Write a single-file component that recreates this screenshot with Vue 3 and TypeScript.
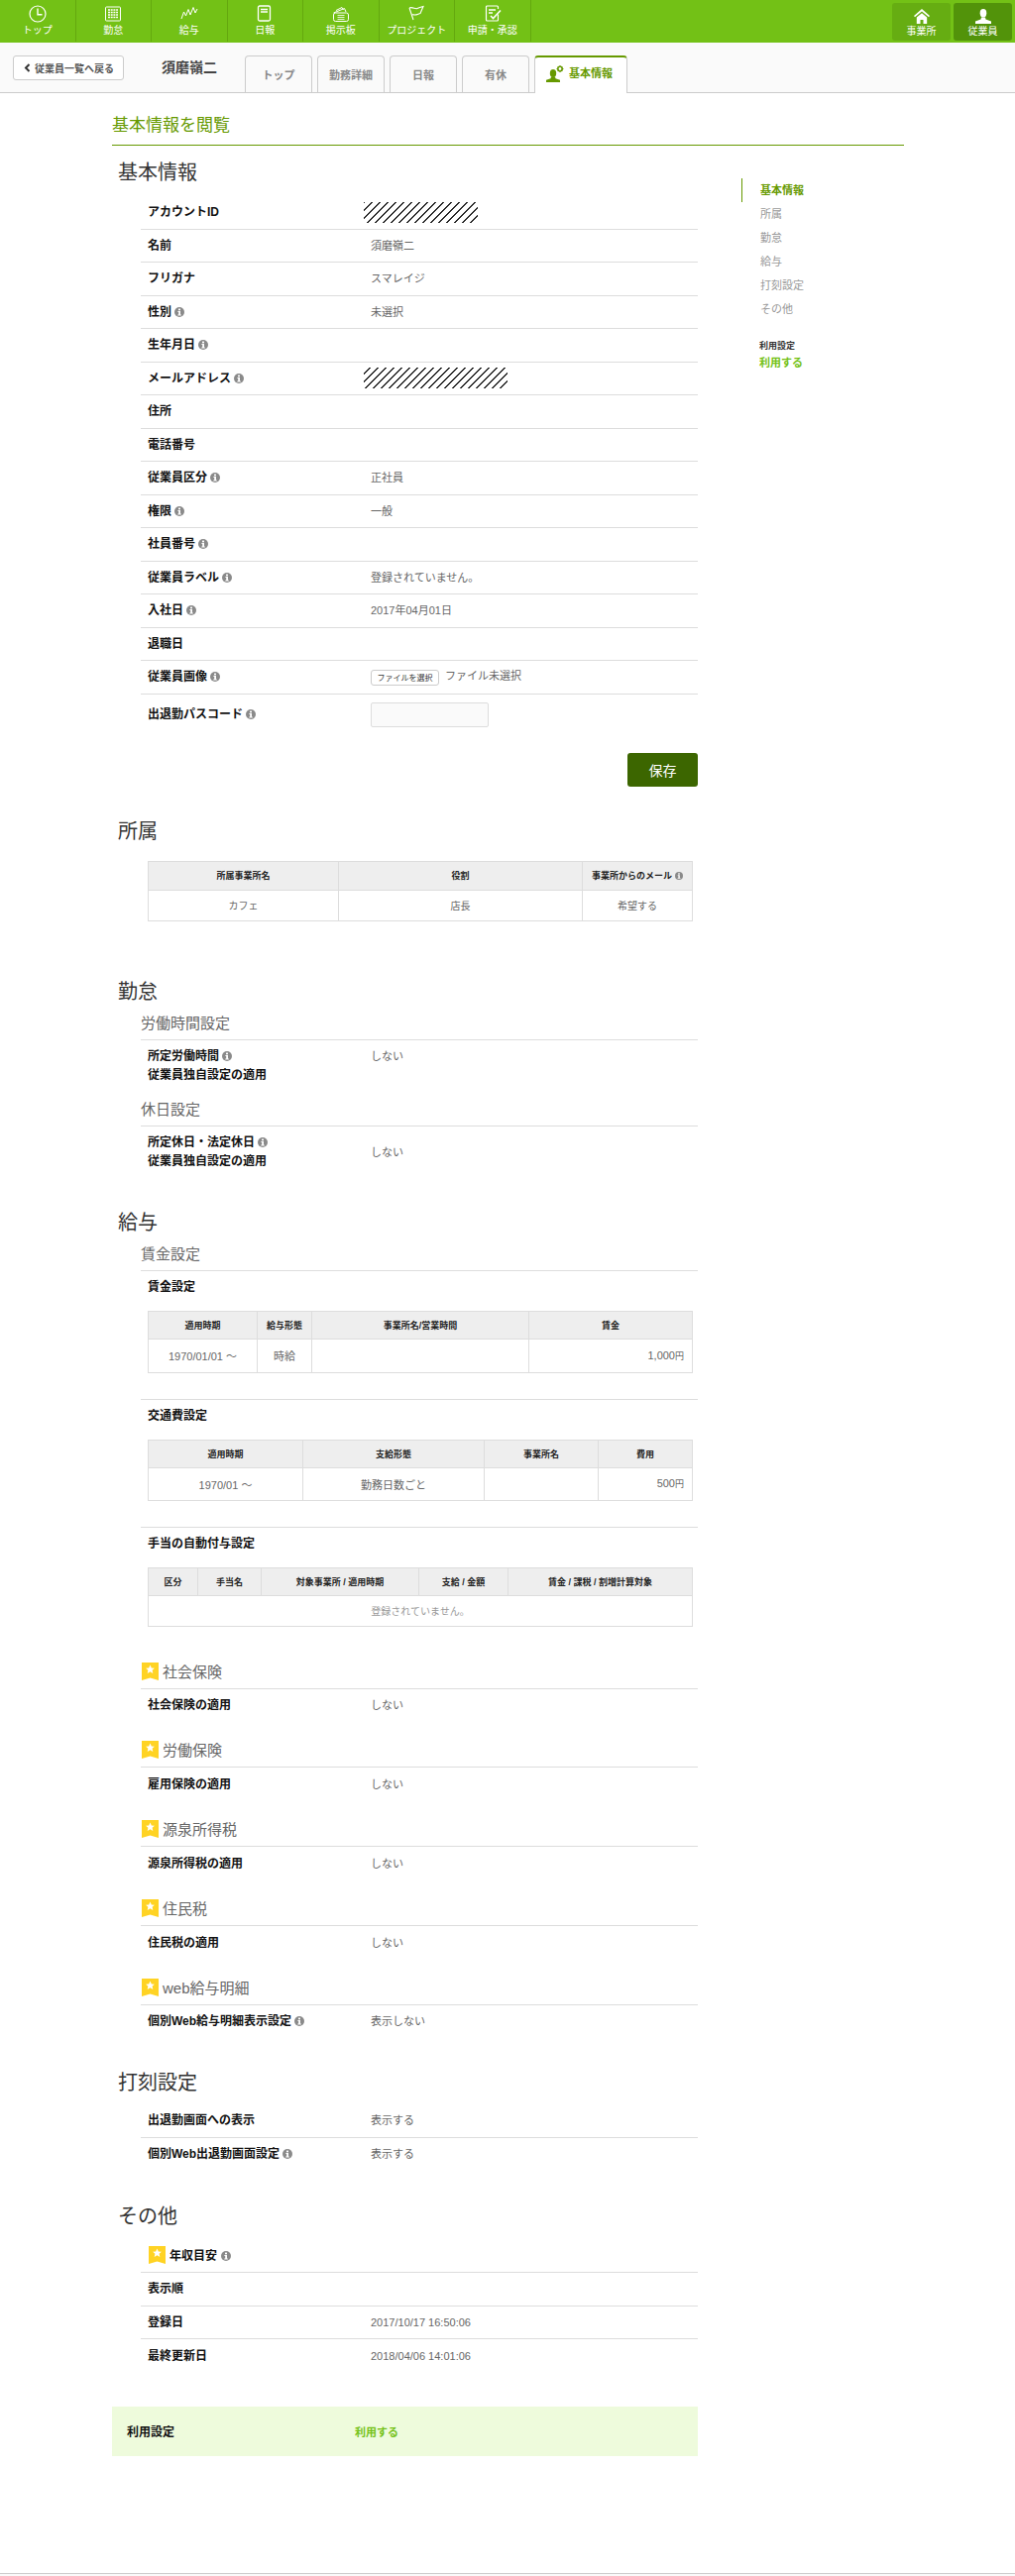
<script setup lang="ts">
interface Row {
  label: string
  value?: string
  info?: boolean
  hatch?: number
}
interface Col {
  label: string
  w: number
  info?: boolean
}
interface Cell {
  text: string
  right?: boolean
  yen?: boolean
}
interface Tbl {
  title?: string
  head: number
  body: number
  cols: Col[]
  cells?: Cell[]
  empty?: string
  size: string
}
interface Ins {
  title: string
  rows: Row[]
}

const nav: { label: string; icon: string }[] = [
  { label: 'トップ', icon: 'clock' },
  { label: '勤怠', icon: 'grid' },
  { label: '給与', icon: 'zig' },
  { label: '日報', icon: 'doc' },
  { label: '掲示板', icon: 'board' },
  { label: 'プロジェクト', icon: 'flag' },
  { label: '申請・承認', icon: 'check' }
]
const tabs = ['トップ', '勤務詳細', '日報', '有休']
const sideItems = ['所属', '勤怠', '給与', '打刻設定', 'その他']

const basicRows: Row[] = [
  { label: 'アカウントID', hatch: 115 },
  { label: '名前', value: '須磨嶺二' },
  { label: 'フリガナ', value: 'スマレイジ' },
  { label: '性別', info: true, value: '未選択' },
  { label: '生年月日', info: true },
  { label: 'メールアドレス', info: true, hatch: 145 },
  { label: '住所' },
  { label: '電話番号' },
  { label: '従業員区分', info: true, value: '正社員' },
  { label: '権限', info: true, value: '一般' },
  { label: '社員番号', info: true },
  { label: '従業員ラベル', info: true, value: '登録されていません。' },
  { label: '入社日', info: true, value: '2017年04月01日' },
  { label: '退職日' }
]

const affiliation: Tbl = {
  head: 29,
  body: 31,
  size: 'small',
  cols: [
    { label: '所属事業所名', w: 192 },
    { label: '役割', w: 246 },
    { label: '事業所からのメール', w: 111, info: true }
  ],
  cells: [{ text: 'カフェ' }, { text: '店長' }, { text: '希望する' }]
}
const payTables: Tbl[] = [
  {
    title: '賃金設定',
    head: 28,
    body: 34,
    size: 'big',
    cols: [
      { label: '適用時期', w: 110 },
      { label: '給与形態', w: 55 },
      { label: '事業所名/営業時間', w: 219 },
      { label: '賃金', w: 165 }
    ],
    cells: [
      { text: '1970/01/01 〜' },
      { text: '時給' },
      { text: '' },
      { text: '1,000', right: true, yen: true }
    ]
  },
  {
    title: '交通費設定',
    head: 28,
    body: 33,
    size: 'big',
    cols: [
      { label: '適用時期', w: 156 },
      { label: '支給形態', w: 183 },
      { label: '事業所名', w: 115 },
      { label: '費用', w: 95 }
    ],
    cells: [
      { text: '1970/01 〜' },
      { text: '勤務日数ごと' },
      { text: '' },
      { text: '500', right: true, yen: true }
    ]
  },
  {
    title: '手当の自動付与設定',
    head: 28,
    body: 31,
    size: 'small',
    cols: [
      { label: '区分', w: 50 },
      { label: '手当名', w: 64 },
      { label: '対象事業所 / 適用時期', w: 159 },
      { label: '支給 / 金額', w: 90 },
      { label: '賃金 / 課税 / 割増計算対象', w: 186 }
    ],
    empty: '登録されていません。'
  }
]
const insurance: Ins[] = [
  { title: '社会保険', rows: [{ label: '社会保険の適用', value: 'しない' }] },
  { title: '労働保険', rows: [{ label: '雇用保険の適用', value: 'しない' }] },
  { title: '源泉所得税', rows: [{ label: '源泉所得税の適用', value: 'しない' }] },
  { title: '住民税', rows: [{ label: '住民税の適用', value: 'しない' }] },
  { title: 'web給与明細', rows: [{ label: '個別Web給与明細表示設定', info: true, value: '表示しない' }] }
]
const clockRows: Row[] = [
  { label: '出退勤画面への表示', value: '表示する' },
  { label: '個別Web出退勤画面設定', info: true, value: '表示する' }
]
const otherRows: Row[] = [
  { label: '表示順' },
  { label: '登録日', value: '2017/10/17 16:50:06' },
  { label: '最終更新日', value: '2018/04/06 14:01:06' }
]
</script>

<template>
  <div class="page">
    <svg class="sprite" width="0" height="0" aria-hidden="true">
      <symbol id="i-info" viewBox="0 0 10 10">
        <circle cx="5" cy="5" r="5" fill="#8a8a8a" />
        <rect x="4" y="1.6" width="2" height="1.7" fill="#fff" />
        <path d="M3.4 4.1H6v3.3h.8v1H3.3v-1h.9V5.1h-.8z" fill="#fff" />
      </symbol>
      <symbol id="i-mark" viewBox="0 0 17 18">
        <path d="M0 0h17v18l-8.500-2.600L0 18z" fill="#ffd324" />
        <path d="M8.500 2.500l1.300 2.900 3.100.3-2.300 2.100.7 3.100-2.800-1.600-2.800 1.600.7-3.100L4.100 5.700l3.100-.3z" fill="#fff" />
      </symbol>
    </svg>

    <header class="topbar">
      <a v-for="n in nav" :key="n.label" class="nav-item">
        <svg class="nav-icon" width="20" height="18" viewBox="0 0 20 18" fill="none" stroke="#fff">
          <g v-if="n.icon === 'clock'" stroke-width="1.2">
            <circle cx="10" cy="9" r="8" />
            <path d="M10 3.500V9.800h4.500" stroke-width="1.400" />
          </g>
          <g v-else-if="n.icon === 'grid'">
            <rect x="2.500" y="2" width="15" height="14" rx="1" stroke-width="1" />
            <path d="M5 5h10M5 7.500h10M5 10h10M5 12.500h10" stroke-width="1.300" stroke-dasharray="2 .7" />
          </g>
          <polyline
            v-else-if="n.icon === 'zig'"
            points="2,14 4.500,7 6.500,11 9,4.500 11,10 14,2.500 16,8 18,4"
            stroke-width="1"
          />
          <g v-else-if="n.icon === 'doc'">
            <rect x="3.500" y="1" width="12" height="15" rx="1.500" stroke-width="1.300" />
            <path d="M6 4.500h7M6 7h7" stroke-width="1.300" />
          </g>
          <g v-else-if="n.icon === 'board'" stroke-width="1">
            <path d="M2.500 8l11-4.500 1.500 3.500" />
            <path d="M5 5.500l6-3 1.500 2.500" />
            <rect x="2.500" y="8" width="15" height="8.500" rx="2" />
            <path d="M6.500 10.500h7M6.500 12.500h7M6.500 14.500h7" stroke-width=".8" />
          </g>
          <g v-else-if="n.icon === 'flag'" stroke-width="1.100">
            <path d="M3 3l4 12" />
            <path d="M3 3c3-1.500 6 1.500 8 .5s4-1.500 6-2l-3 7c-2 .5-3.500 1.500-5.500 1.500-.8 0-1.500-.3-2.500-.3" />
          </g>
          <g v-else stroke-width="1.200">
            <path d="M15.500 9.500V15a1 1 0 0 1-1 1h-10a1 1 0 0 1-1-1V2a1 1 0 0 1 1-1h10a1 1 0 0 1 1 1v2" />
            <path d="M6 5h7M6 8h4" stroke-width="1.300" />
            <path d="M8 11l2.500 2.500L18 5.500" stroke-width="1.600" />
          </g>
        </svg>
        <span>{{ n.label }}</span>
      </a>
      <div class="shop-btns">
        <a class="shop-btn">
          <svg width="16" height="15" viewBox="0 0 16 15" fill="#fff">
            <path d="M8 0L0 7l1 1.300L8 2.500l7 5.800L16 7z" />
            <path d="M8 4.200L2.800 8.500V15h3.700v-4h3V15h3.700V8.500z" />
          </svg>
          <span>事業所</span>
        </a>
        <a class="shop-btn on">
          <svg width="16" height="15" viewBox="0 0 16 15" fill="#fff">
            <ellipse cx="8" cy="4.200" rx="3.300" ry="4.200" />
            <path d="M6 8.500h4l.5 2L16 12.500V15H0v-2.500l5.500-2z" />
          </svg>
          <span>従業員</span>
        </a>
      </div>
    </header>

    <div class="subbar">
      <a class="back">
        <svg width="7" height="9" viewBox="0 0 7 9" fill="none" stroke="#333" stroke-width="2">
          <path d="M5.500 1L2 4.500 5.500 8" />
        </svg>
        <span>従業員一覧へ戻る</span>
      </a>
      <div class="person-name">須磨嶺二</div>
      <nav class="tabs">
        <a v-for="t in tabs" :key="t" class="tab">{{ t }}</a>
        <a class="tab active">
          <svg width="18" height="17" viewBox="0 0 18 17" fill="#669900">
            <ellipse cx="7" cy="8" rx="3.200" ry="4" />
            <path d="M5 11.500h4l.5 1.800 4.500 1.500V17H0v-2.200l4.500-1.500z" />
            <circle cx="14" cy="3.500" r="2.200" fill="none" stroke="#669900" stroke-width="1.600" />
            <path d="M14 0v1M14 6v1M10.500 3.500h1M16.500 3.500h1M11.600 1.100l.6.600M15.800 5.300l.6.600M11.600 5.900l.6-.600M15.800 1.700l.6-.600" stroke="#669900" />
          </svg>
          <span>基本情報</span>
        </a>
      </nav>
    </div>

    <h1 class="page-title">基本情報を閲覧</h1>

    <div class="layout">
      <main class="main">
        <section class="sec-basic">
          <h2>基本情報</h2>
          <div class="rows">
            <div v-for="r in basicRows" :key="r.label" class="row">
              <div class="label">
                {{ r.label }}
                <svg v-if="r.info" class="info"><use href="#i-info" /></svg>
              </div>
              <div v-if="r.hatch" class="hatch" :style="{ width: r.hatch + 'px' }"></div>
              <div v-else class="value">{{ r.value }}</div>
            </div>
            <div class="row">
              <div class="label">従業員画像 <svg class="info"><use href="#i-info" /></svg></div>
              <div class="value file-cell">
                <span class="file-btn">ファイルを選択</span>
                <span class="file-none">ファイル未選択</span>
              </div>
            </div>
            <div class="row row-pass">
              <div class="label">出退勤パスコード <svg class="info"><use href="#i-info" /></svg></div>
              <input class="pass" type="text" />
            </div>
          </div>
          <div class="save-line"><button class="save" type="button">保存</button></div>
        </section>

        <section class="sec-aff">
          <h2>所属</h2>
          <table class="tbl">
            <colgroup><col v-for="c in affiliation.cols" :key="c.label" :style="{ width: c.w + 'px' }" /></colgroup>
            <thead>
              <tr :style="{ height: affiliation.head + 'px' }">
                <th v-for="c in affiliation.cols" :key="c.label">
                  {{ c.label }}<svg v-if="c.info" class="info mini"><use href="#i-info" /></svg>
                </th>
              </tr>
            </thead>
            <tbody>
              <tr :style="{ height: affiliation.body + 'px' }">
                <td v-for="c in affiliation.cells" :key="c.text" class="td-small">{{ c.text }}</td>
              </tr>
            </tbody>
          </table>
        </section>

        <section class="sec-attend">
          <h2>勤怠</h2>
          <h3>労働時間設定</h3>
          <div class="rows">
            <div class="row2 top">
              <div class="label2">
                <div>所定労働時間 <svg class="info"><use href="#i-info" /></svg></div>
                <div>従業員独自設定の適用</div>
              </div>
              <div class="value">しない</div>
            </div>
          </div>
          <h3 class="h3-next">休日設定</h3>
          <div class="rows">
            <div class="row2">
              <div class="label2">
                <div>所定休日・法定休日 <svg class="info"><use href="#i-info" /></svg></div>
                <div>従業員独自設定の適用</div>
              </div>
              <div class="value">しない</div>
            </div>
          </div>
        </section>

        <section class="sec-pay">
          <h2>給与</h2>
          <h3>賃金設定</h3>
          <div v-for="t in payTables" :key="t.title" class="pay-block">
            <div class="pay-title">{{ t.title }}</div>
            <table class="tbl">
              <colgroup><col v-for="c in t.cols" :key="c.label" :style="{ width: c.w + 'px' }" /></colgroup>
              <thead>
                <tr :style="{ height: t.head + 'px' }">
                  <th v-for="c in t.cols" :key="c.label">{{ c.label }}</th>
                </tr>
              </thead>
              <tbody>
                <tr :style="{ height: t.body + 'px' }">
                  <td v-if="t.empty" :colspan="t.cols.length" class="td-empty">{{ t.empty }}</td>
                  <template v-else>
                    <td v-for="(c, i) in t.cells" :key="i" :class="{ right: c.right }">
                      {{ c.text }}<small v-if="c.yen">円</small>
                    </td>
                  </template>
                </tr>
              </tbody>
            </table>
          </div>

          <div v-for="g in insurance" :key="g.title" class="ins">
            <h3 class="h3-icon"><svg class="mark"><use href="#i-mark" /></svg>{{ g.title }}</h3>
            <div class="rows">
              <div v-for="r in g.rows" :key="r.label" class="row">
                <div class="label">
                  {{ r.label }}
                  <svg v-if="r.info" class="info"><use href="#i-info" /></svg>
                </div>
                <div class="value">{{ r.value }}</div>
              </div>
            </div>
          </div>
        </section>

        <section class="sec-clock">
          <h2>打刻設定</h2>
          <div class="rows">
            <div v-for="r in clockRows" :key="r.label" class="row">
              <div class="label">
                {{ r.label }}
                <svg v-if="r.info" class="info"><use href="#i-info" /></svg>
              </div>
              <div class="value">{{ r.value }}</div>
            </div>
          </div>
        </section>

        <section class="sec-other">
          <h2>その他</h2>
          <h4 class="h4-icon">
            <svg class="mark"><use href="#i-mark" /></svg>年収目安
            <svg class="info"><use href="#i-info" /></svg>
          </h4>
          <div class="rows">
            <div v-for="r in otherRows" :key="r.label" class="row">
              <div class="label">{{ r.label }}</div>
              <div class="value">{{ r.value }}</div>
            </div>
          </div>
        </section>

        <div class="use-box">
          <div class="use-label">利用設定</div>
          <div class="use-value">利用する</div>
        </div>
      </main>

      <aside class="side">
        <a class="side-item current">基本情報</a>
        <a v-for="s in sideItems" :key="s" class="side-item">{{ s }}</a>
        <div class="side-use-label">利用設定</div>
        <div class="side-use-value">利用する</div>
      </aside>
    </div>

    <footer class="foot"></footer>
  </div>
</template>

<style scoped>
.page {
  width: 1024px;
  height: 2600px;
  overflow: hidden;
  font-family: "Liberation Sans", "Noto Sans CJK JP", sans-serif;
  color: #333;
  background: #fff;
}
.sprite {
  position: absolute;
}

/* top bar */
.topbar {
  display: flex;
  height: 43px;
  background: #73c116;
}
.nav-item {
  box-sizing: border-box;
  width: 76.5px;
  height: 42px;
  border-right: 1px solid #64a80f;
  display: flex;
  flex-direction: column;
  align-items: center;
  color: #fff;
  font-size: 10px;
  line-height: 14px;
  padding-top: 5px;
}
.nav-icon {
  margin-bottom: 1px;
}
.shop-btns {
  margin-left: auto;
  display: flex;
  gap: 3px;
  padding: 3px 3px 0 0;
}
.shop-btn {
  box-sizing: border-box;
  width: 59px;
  height: 38px;
  border-radius: 3px;
  background: #66ad12;
  color: #fff;
  font-size: 10px;
  line-height: 14px;
  display: flex;
  flex-direction: column;
  align-items: center;
  padding-top: 6px;
  gap: 1px;
}
.shop-btn.on {
  background: #52930a;
}

/* sub bar */
.subbar {
  box-sizing: content-box;
  height: 50px;
  display: flex;
  padding-left: 13px;
  background: #fafafa;
  border-bottom: 1px solid #ccc;
}
.back {
  box-sizing: border-box;
  width: 112px;
  height: 25px;
  margin-top: 13px;
  background: #fff;
  border: 1px solid #ccc;
  border-radius: 3px;
  display: flex;
  align-items: center;
  gap: 4px;
  padding-left: 10px;
  font-size: 10px;
  font-weight: 700;
  color: #555;
  white-space: nowrap;
}
.person-name {
  margin: 13px 0 0 38px;
  width: 56px;
  font-size: 14px;
  line-height: 25px;
  font-weight: 700;
  color: #444;
  white-space: nowrap;
}
.tabs {
  display: flex;
  gap: 5px;
  margin: 13px 0 0 28px;
}
.tab {
  box-sizing: border-box;
  width: 68px;
  height: 37px;
  border: 1px solid #ccc;
  border-bottom: none;
  border-radius: 4px 4px 0 0;
  font-size: 11px;
  font-weight: 700;
  color: #888;
  text-align: center;
  line-height: 38px;
  background: #fafafa;
}
.tab.active {
  width: 94px;
  height: 38px;
  background: #fff;
  border-top: 2px solid #669900;
  color: #669900;
  display: flex;
  align-items: center;
  gap: 5px;
  padding: 0 0 4px 11px;
  line-height: 16px;
}

.page-title {
  box-sizing: border-box;
  margin: 21px 0 0 113px;
  width: 799px;
  height: 32px;
  border-bottom: 1px solid #669900;
  font-size: 17px;
  line-height: 24px;
  font-weight: 400;
  color: #669900;
}

.layout {
  display: flex;
  margin-left: 113px;
}
.main {
  width: 591px;
}

h2 {
  margin: 0;
  padding-left: 6px;
  font-size: 20px;
  line-height: 28px;
  font-weight: 400;
  color: #333;
}
h3 {
  box-sizing: border-box;
  margin: 7px 0 0 29px;
  height: 28px;
  border-bottom: 1px solid #ddd;
  font-size: 15px;
  line-height: 22px;
  font-weight: 400;
  color: #666;
}
.h3-next {
  margin-top: 14px;
}
.rows {
  margin-left: 29px;
}
.row {
  box-sizing: border-box;
  height: 33.53px;
  display: flex;
  align-items: center;
  padding-left: 7px;
  border-bottom: 1px solid #ddd;
}
.row:last-child {
  border-bottom: none;
}
.label {
  width: 225px;
  flex: none;
  font-size: 12px;
  font-weight: 700;
  color: #111;
  line-height: 18px;
  display: flex;
  align-items: center;
  gap: 3px;
}
.value {
  font-size: 11px;
  line-height: 18px;
  color: #666;
}
.info {
  width: 10px;
  height: 10px;
  flex: none;
  vertical-align: -1px;
}
.info.mini {
  width: 8px;
  height: 8px;
  margin-left: 3px;
}
.hatch {
  height: 21px;
  margin-left: -7px;
  background: repeating-linear-gradient(-45deg, transparent 0, transparent 4.860px, #2a2a2a 4.860px, #2a2a2a 5.660px);
}

.sec-basic {
  padding-top: 13px;
}
.sec-basic .rows {
  margin-top: 10px;
}
.file-cell {
  display: flex;
  align-items: center;
  gap: 6px;
}
.file-btn {
  box-sizing: border-box;
  width: 69px;
  height: 16px;
  border: 1px solid #ccc;
  border-radius: 3px;
  background: #fff;
  font-size: 8px;
  line-height: 15px;
  text-align: center;
  color: #333;
  margin-top: 2px;
  white-space: nowrap;
}
.file-none {
  color: #666;
  margin-top: -3px;
}
.row-pass {
  height: 41px;
  align-items: flex-start;
  padding-top: 8px;
}
.row-pass .label {
  padding-top: 3px;
}
.pass {
  box-sizing: border-box;
  width: 119px;
  height: 25px;
  border: 1px solid #ddd;
  border-radius: 2px;
  background: #fafafa;
  padding: 0;
}
.save-line {
  display: flex;
  justify-content: flex-end;
  margin-top: 18px;
}
.save {
  width: 71px;
  height: 34px;
  border: none;
  border-radius: 3px;
  background: #3c6600;
  color: #fff;
  font: inherit;
  font-size: 14px;
}

.sec-aff {
  padding-top: 31px;
}
.tbl {
  table-layout: fixed;
  border-collapse: collapse;
  width: 549px;
  margin-left: 36px;
}
.sec-aff .tbl {
  margin-top: 16px;
}
.tbl th,
.tbl td {
  border: 1px solid #ddd;
  padding: 0;
  text-align: center;
  vertical-align: middle;
}
.tbl th {
  background: #eee;
  font-size: 9px;
  font-weight: 700;
  color: #222;
  white-space: nowrap;
}
.tbl td {
  font-size: 11px;
  color: #666;
}
.tbl td.td-small {
  font-size: 10px;
}
.tbl td.td-empty {
  font-size: 10px;
  color: #999;
}
.tbl td.right {
  text-align: right;
  padding-right: 8px;
}
.tbl small {
  font-size: 9px;
}

.sec-attend {
  padding-top: 57px;
}
.row2 {
  display: flex;
  align-items: center;
  height: 38px;
  margin-top: 7px;
  padding-left: 7px;
}
.row2.top {
  align-items: flex-start;
}
.label2 {
  width: 225px;
  flex: none;
  font-size: 12px;
  line-height: 19px;
  font-weight: 700;
  color: #111;
}

.sec-pay {
  padding-top: 38px;
}
.pay-block {
  margin: 26px 0 0 29px;
  padding-top: 7px;
  border-top: 1px solid #ddd;
}
h3 + .pay-block {
  margin-top: 0;
  border-top: none;
}
.pay-block .tbl {
  margin: 15px 0 0 7px;
}
.pay-title {
  padding-left: 7px;
  font-size: 12px;
  line-height: 18px;
  font-weight: 700;
  color: #111;
}
.ins {
  margin-top: 18.200px;
}
.pay-block + .ins {
  margin-top: 35px;
}
h3.h3-icon {
  margin-top: 0;
  display: flex;
  gap: 4px;
  padding-left: 1px;
}
.mark {
  width: 17px;
  height: 18px;
  flex: none;
  margin-top: 1px;
}

.sec-clock {
  padding-top: 31px;
}
.sec-clock .rows {
  margin-top: 8px;
}
.sec-other {
  padding-top: 32px;
}
.h4-icon {
  box-sizing: border-box;
  margin: 15px 0 0 29px;
  height: 28px;
  padding-left: 8px;
  border-bottom: 1px solid #ddd;
  display: flex;
  align-items: flex-start;
  gap: 4px;
  font-size: 12px;
  line-height: 22px;
  font-weight: 700;
  color: #111;
}
.h4-icon .info {
  margin-top: 6px;
}
.use-box {
  box-sizing: border-box;
  margin-top: 34px;
  height: 50px;
  background: #eefbdc;
  display: flex;
  align-items: center;
  padding-left: 15px;
}
.use-label {
  width: 230px;
  font-size: 12px;
  font-weight: 700;
  color: #111;
}
.use-value {
  font-size: 11px;
  font-weight: 700;
  color: #73c116;
}

.side {
  margin: 33px 0 0 44px;
  display: flex;
  flex-direction: column;
  align-items: flex-start;
  height: 210px;
}
.side-item {
  box-sizing: border-box;
  height: 24px;
  padding-left: 18px;
  border-left: 1px solid transparent;
  font-size: 11px;
  line-height: 24px;
  color: #999;
}
.side-item.current {
  border-left-color: #669900;
  color: #669900;
  font-weight: 700;
}
.side-use-label {
  margin: 16px 0 0 18px;
  font-size: 9px;
  font-weight: 700;
  line-height: 18px;
  color: #333;
}
.side-use-value {
  margin-left: 18px;
  font-size: 11px;
  font-weight: 700;
  line-height: 16px;
  color: #73c116;
}

.foot {
  margin-top: 118px;
  height: 3px;
  border-top: 1px solid #ccc;
  background: #fafafa;
}
</style>
